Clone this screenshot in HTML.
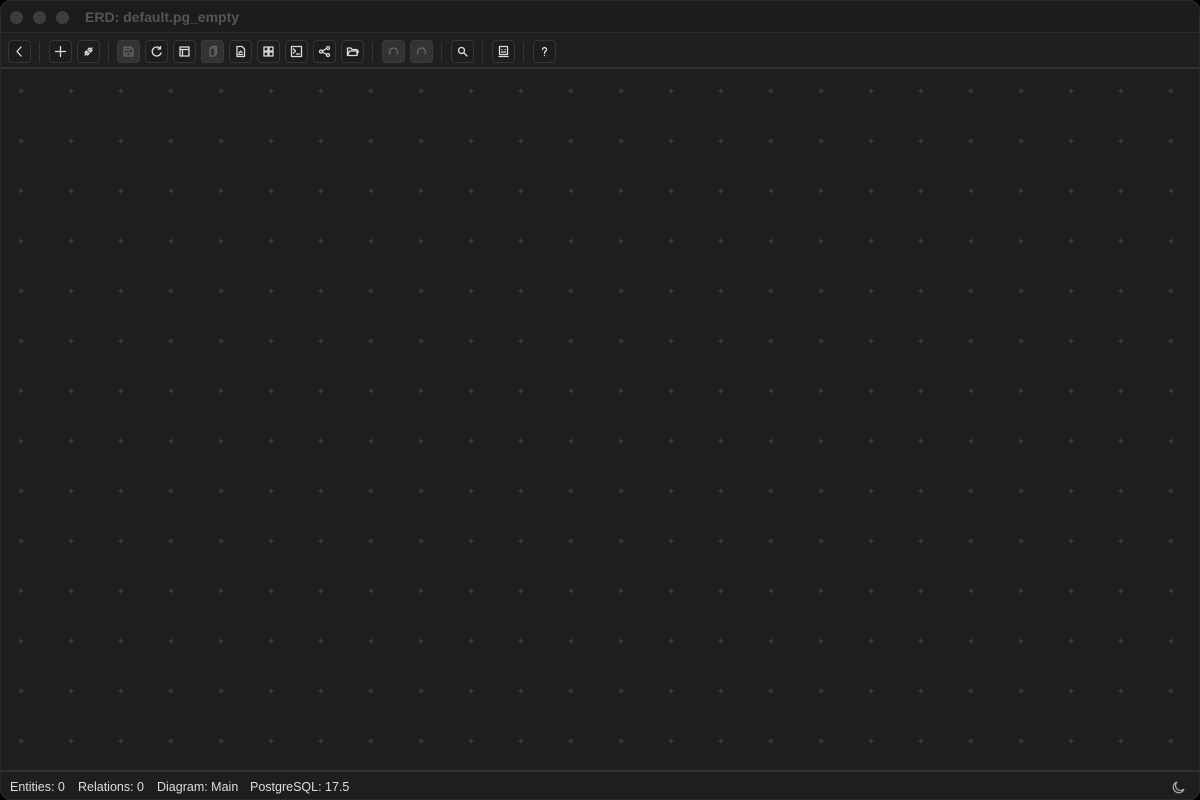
<!DOCTYPE html>
<html><head><meta charset="utf-8"><style>
*{margin:0;padding:0;box-sizing:border-box}
html,body{width:1200px;height:800px;overflow:hidden;background:#000;font-family:"Liberation Sans",sans-serif}
.win{position:absolute;inset:0;background:#1e1e1e;border-radius:10px;overflow:hidden;border:1px solid #2a2a2a}
.title{position:absolute;left:0;top:0;width:100%;height:32px;background:#1c1c1c;border-bottom:1px solid #2c2c2c}
.dot{position:absolute;top:10px;width:13px;height:13px;border-radius:50%;background:#3d3d3d}
.ttl{position:absolute;left:84px;top:8px;font-size:14px;font-weight:bold;color:#555}
.tb{position:absolute;left:0;top:32px;width:100%;height:36px;background:#1f1f1f;border-bottom:2px solid #333}
.b{position:absolute;top:7px;width:23px;height:23px;border:1px solid #363636;border-radius:4px;background:#1d1d1d;display:flex;align-items:center;justify-content:center}
.b.d{background:#333;border-color:#3a3a3a}
.b svg{width:13px;height:13px;fill:none;stroke:#ddd;stroke-width:1.3;stroke-linecap:round;stroke-linejoin:round}
.b.d svg{stroke:#666}
.sep{position:absolute;top:9px;width:1px;height:20px;background:#333}
.sb{position:absolute;left:0;top:769px;width:100%;height:31px;background:#1e1e1e;border-top:2px solid #333;font-size:12.5px;color:#ddd}
.sb span{position:absolute;top:8px}
</style></head><body><div class="win">
<div class="title"><div class="dot" style="left:9px"></div><div class="dot" style="left:32px"></div><div class="dot" style="left:55px"></div><div class="ttl">ERD: default.pg_empty</div></div>
<div class="tb">
<div class="b" style="left:7px"><svg viewBox="0 0 13 13"><path d="M8 2L4 6.5L8 11"/></svg></div>
<div class="sep" style="left:38px"></div>
<div class="b" style="left:48px"><svg viewBox="0 0 13 13"><path d="M6.5 1.5v10M1.5 6.5h10"/></svg></div>
<div class="b" style="left:76px"><svg viewBox="0 0 13 13"><path d="M3 10L5 8M8 5l2-2M4.5 6L7 8.5L5.5 10 3 7.5zM6 4.5L8.5 7 10 5.5 7.5 3z"/></svg></div>
<div class="sep" style="left:107px"></div>
<div class="b d" style="left:116px"><svg viewBox="0 0 13 13"><path d="M2 2h7l2 2v7H2zM4 2v3h4V2M4 11V8h5v3"/></svg></div>
<div class="b" style="left:144px"><svg viewBox="0 0 13 13"><path d="M10.5 4A4.5 4.5 0 1 0 11 8M10.5 1.5V4H8"/></svg></div>
<div class="b" style="left:172px"><svg viewBox="0 0 13 13"><path d="M2 2h9v9H2zM2 4.5h9M4.5 4.5V11"/></svg></div>
<div class="b d" style="left:200px"><svg viewBox="0 0 13 13"><path d="M4 3h5v8H4zM6 3V1.5h4.5V9H9"/></svg></div>
<div class="b" style="left:228px"><svg viewBox="0 0 13 13"><path d="M3 1.5h5l2.5 2.5v7.5H3zM4.5 9.5h4M5 8l1.5-2 1.5 1.5"/></svg></div>
<div class="b" style="left:256px"><svg viewBox="0 0 13 13"><path d="M2 2h4v4H2zM7 2h4v4H7zM2 7h4v4H2zM7 7h4v4H7z"/></svg></div>
<div class="b" style="left:284px"><svg viewBox="0 0 13 13"><path d="M1.5 1.5h10v10h-10zM3.5 4l2 2-2 2M6.5 9h3"/></svg></div>
<div class="b" style="left:312px"><svg viewBox="0 0 13 13"><circle cx="3" cy="6.5" r="1.5"/><circle cx="10" cy="3" r="1.5"/><circle cx="10" cy="10" r="1.5"/><path d="M4.5 6L8.5 3.5M4.5 7L8.5 9.5"/></svg></div>
<div class="b" style="left:340px"><svg viewBox="0 0 13 13"><path d="M1.5 3h3.5l1 1.5h5v6h-9.5zM1.5 10.5l2-4.5h9l-2 4.5"/></svg></div>
<div class="sep" style="left:371px"></div>
<div class="b d" style="left:381px"><svg viewBox="0 0 13 13"><path d="M3 9A4 4 0 1 1 10 9"/></svg></div>
<div class="b d" style="left:409px"><svg viewBox="0 0 13 13"><path d="M3 9A4 4 0 1 1 10 9"/></svg></div>
<div class="sep" style="left:440px"></div>
<div class="b" style="left:450px"><svg viewBox="0 0 13 13"><circle cx="5.5" cy="5.5" r="3"/><path d="M8 8l3 3"/></svg></div>
<div class="sep" style="left:481px"></div>
<div class="b" style="left:491px"><svg viewBox="0 0 13 13"><path d="M2.5 1.5h8v8h-8zM2 11.5h9M4.5 7h4M5 4.5v.1M8 4.5v.1"/></svg></div>
<div class="sep" style="left:522px"></div>
<div class="b" style="left:532px"><svg viewBox="0 0 13 13"><path d="M4.5 4.5a2 2 0 1 1 3 1.8c-.8.5-1 1-1 2M6.5 10.5v.1"/></svg></div>
</div>
<svg style="position:absolute;left:0;top:70px" width="1200" height="699" shape-rendering="crispEdges">
<defs>
<pattern id="p" x="0" y="0" width="10" height="10" patternUnits="userSpaceOnUse"><rect x="0" y="0" width="1" height="1" fill="#2e2e2e"/></pattern>
<pattern id="q" x="0" y="0" width="50" height="50" patternUnits="userSpaceOnUse"><path d="M17.5 20h5M20 17.5v5" stroke="#454545" stroke-width="1"/></pattern>
</defs>
<rect width="1200" height="699" fill="url(#p)"/>
<rect width="1200" height="699" fill="url(#q)"/>
</svg>
<div class="sb"><span style="left:9px">Entities: 0</span><span style="left:77px">Relations: 0</span><span style="left:156px">Diagram: Main</span><span style="left:249px">PostgreSQL: 17.5</span>
<svg style="position:absolute;left:1171px;top:8px" width="14" height="14" viewBox="0 0 14 14"><path d="M5 2A5.5 5.5 0 1 0 12 9 4.5 4.5 0 0 1 5 2z" fill="none" stroke="#aaa" stroke-width="1.2"/></svg></div>
</div></body></html>
